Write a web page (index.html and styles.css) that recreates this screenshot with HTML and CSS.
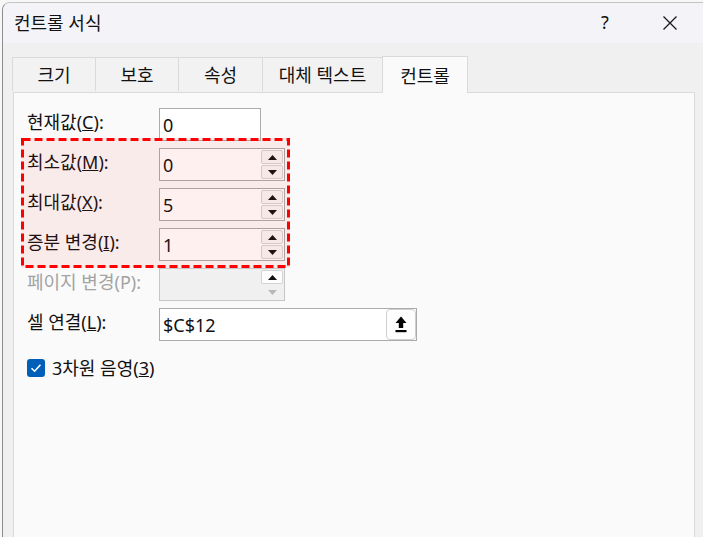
FILE: index.html
```html
<!DOCTYPE html>
<html lang="ko">
<head>
<meta charset="utf-8">
<title>컨트롤 서식</title>
<link rel="stylesheet" href="styles.css">
</head>
<body>
<div class="window">
  <div class="titlebar">
    <span class="title">컨트롤 서식</span>
    <span class="help">?</span>
    <span class="close">
      <svg width="16" height="16" viewBox="0 0 16 16"><path d="M1.5 1.5 L14.5 14.5 M14.5 1.5 L1.5 14.5" stroke="#1a1a1a" stroke-width="1.3" fill="none"/></svg>
    </span>
  </div>
  <div class="tabs">
    <div class="tab t1">크기</div>
    <div class="tab t2">보호</div>
    <div class="tab t3">속성</div>
    <div class="tab t4">대체 텍스트</div>
    <div class="tab t5 active">컨트롤</div>
  </div>
  <div class="panel">
    <div class="highlight">
      <svg width="269" height="130" viewBox="0 0 269 130"><rect x="1.5" y="1.5" width="266" height="127" fill="none" stroke="#ff0000" stroke-width="3" stroke-dasharray="8 4"/></svg>
    </div>
    <div class="row">
      <label class="lbl">현재값(<u>C</u>):</label>
      <div class="field w1"><span class="val">0</span></div>
    </div>
    <div class="row">
      <label class="lbl">최소값(<u>M</u>):</label>
      <div class="field spin"><span class="val">0</span>
        <div class="spinbtns">
          <div class="sb"><svg width="9" height="5" viewBox="0 0 9 5"><path d="M0 5 L4.5 0 L9 5 Z" fill="#111"/></svg></div>
          <div class="sb"><svg width="9" height="5" viewBox="0 0 9 5"><path d="M0 0 L4.5 5 L9 0 Z" fill="#111"/></svg></div>
        </div>
      </div>
    </div>
    <div class="row">
      <label class="lbl">최대값(<u>X</u>):</label>
      <div class="field spin"><span class="val">5</span>
        <div class="spinbtns">
          <div class="sb"><svg width="9" height="5" viewBox="0 0 9 5"><path d="M0 5 L4.5 0 L9 5 Z" fill="#111"/></svg></div>
          <div class="sb"><svg width="9" height="5" viewBox="0 0 9 5"><path d="M0 0 L4.5 5 L9 0 Z" fill="#111"/></svg></div>
        </div>
      </div>
    </div>
    <div class="row">
      <label class="lbl">증분 변경(<u>I</u>):</label>
      <div class="field spin"><span class="val">1</span>
        <div class="spinbtns">
          <div class="sb"><svg width="9" height="5" viewBox="0 0 9 5"><path d="M0 5 L4.5 0 L9 5 Z" fill="#111"/></svg></div>
          <div class="sb"><svg width="9" height="5" viewBox="0 0 9 5"><path d="M0 0 L4.5 5 L9 0 Z" fill="#111"/></svg></div>
        </div>
      </div>
    </div>
    <div class="row">
      <label class="lbl disabled">페이지 변경(P):</label>
      <div class="field spin off">
        <div class="spinbtns">
          <div class="sb"><svg width="9" height="5" viewBox="0 0 9 5"><path d="M0 5 L4.5 0 L9 5 Z" fill="#111"/></svg></div>
          <div class="sb plain"><svg width="9" height="5" viewBox="0 0 9 5"><path d="M0 0 L4.5 5 L9 0 Z" fill="#b8b8b8"/></svg></div>
        </div>
      </div>
    </div>
    <div class="row">
      <label class="lbl">셀 연결(<u>L</u>):</label>
      <div class="field w3"><span class="val">$C$12</span>
        <div class="refbtn">
          <svg width="12" height="17" viewBox="0 0 12 17"><path d="M6 0.5 L11.5 7 H8.2 V12 H3.8 V7 H0.5 Z" fill="#000"/><rect x="0.5" y="14" width="11" height="2.2" fill="#000"/></svg>
        </div>
      </div>
    </div>
    <div class="check">
      <span class="box"><svg width="12" height="10" viewBox="0 0 12 10"><path d="M1.5 5.2 L4.6 8.2 L10.5 1.8" stroke="#fff" stroke-width="1.6" fill="none"/></svg></span>
      <span class="clbl">3차원 음영(<u>3</u>)</span>
    </div>
  </div>
</div>
</body>
</html>
```

FILE: styles.css
```css
* { box-sizing: border-box; }
html, body { margin: 0; padding: 0; }
body {
  width: 703px;
  height: 537px;
  overflow: hidden;
  background: #f7f7f7;
  font-family: "Noto Sans", "Noto Sans CJK KR", sans-serif;
  font-size: 18px;
  color: #111;
}
.window {
  margin: 2px 0 0 2px;
  height: 535px;
  background: #f0f0f0;
  border-left: 1px solid #8e8e8e;
  border-top: 1px solid #c4c4c4;
  border-top-left-radius: 8px;
  overflow: hidden;
}
.titlebar {
  height: 40px;
  background: #f3f3f8;
  display: flex;
  align-items: center;
  padding-left: 11px;
}
.title { flex: 1; font-size: 18px; padding-bottom: 3px; }
.help { width: 20px; text-align: center; font-size: 18px; margin-right: 45px; padding-bottom: 2px; }
.close { width: 20px; display: flex; justify-content: center; margin-right: 23px; }
.tabs {
  display: flex;
  align-items: flex-end;
  height: 49px;
  padding-left: 9px;
  position: relative;
  z-index: 2;
}
.tab {
  height: 34px;
  margin-bottom: 1px;
  border: 1px solid #dadada;
  border-bottom: none;
  background: #f2f2f2;
  display: flex;
  align-items: center;
  justify-content: center;
  font-size: 18px;
  margin-left: -1px;
  padding-bottom: 1px;
}
.t1 { width: 84px; margin-left: 0; }
.t2 { width: 84px; }
.t3 { width: 85px; }
.t4 { width: 121px; }
.t5 { width: 86px; }
.tab.active {
  height: 37px;
  margin-bottom: -1px;
  background: #fafafa;
  padding-bottom: 0;
}
.panel {
  position: relative;
  margin-left: 10px;
  width: 682px;
  height: 460px;
  background: #fafafa;
  border: 1px solid #dadada;
  padding: 15px 0 0 13px;
  display: flex;
  flex-direction: column;
  gap: 7px;
}
.highlight {
  position: absolute;
  left: 7px;
  top: 45px;
  width: 269px;
  height: 130px;
  background: rgba(255, 40, 40, 0.07);
  z-index: 3;
  pointer-events: none;
}
.highlight svg { display: block; }
.row {
  display: flex;
  align-items: center;
  height: 33px;
}
.lbl {
  width: 132px;
  padding-bottom: 8px;
  white-space: nowrap;
}
.lbl.disabled { color: #a3a3a3; }
.field {
  position: relative;
  height: 33px;
  background: #fff;
  border: 1px solid #ababab;
  display: flex;
  align-items: center;
  padding-left: 3px;
}
.w1 { width: 102px; }
.spin { width: 126px; }
.w3 { width: 258px; }
.field.off { background: #f0f0f0; border-color: #c6c6c6; }
.val { flex: 1; font-size: 18px; padding-top: 1px; }
.spinbtns {
  margin-left: auto;
  width: 23px;
  height: 31px;
  display: flex;
  flex-direction: column;
  gap: 1px;
  padding: 1px 1px 1px 0;
}
.sb {
  flex: 1;
  border: 1px solid #d4d4d4;
  border-radius: 2px;
  background: #f7f7f7;
  display: flex;
  align-items: center;
  justify-content: center;
}
.field.off .sb { background: #fdfdfd; }
.sb.plain { border-color: transparent; background: transparent !important; }
.refbtn {
  margin-left: auto;
  width: 30px;
  height: 31px;
  border: 1px solid #d0d0d0;
  border-radius: 4px;
  background: #fdfdfd;
  display: flex;
  align-items: center;
  justify-content: center;
}
.check {
  display: flex;
  align-items: center;
  margin-top: 10px;
  height: 20px;
}
.box {
  width: 18px;
  height: 18px;
  border-radius: 3px;
  background: #005fb8;
  display: flex;
  align-items: center;
  justify-content: center;
  margin-right: 7px;
}
.clbl { font-size: 18px; padding-bottom: 3px; }
u { text-underline-offset: 1px; }
```
